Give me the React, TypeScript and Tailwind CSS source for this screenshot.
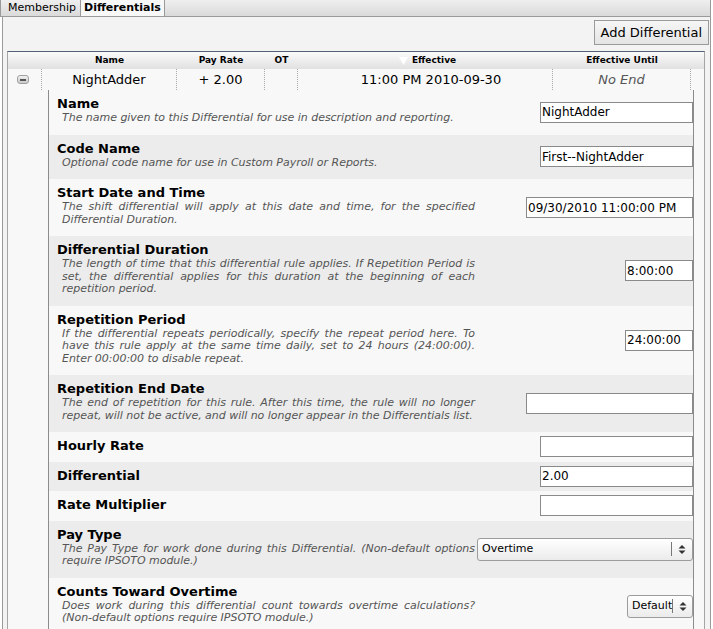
import React from 'react';

type Field = {
  label: string;
  desc?: string;
  value?: string;
  kind?: 'text' | 'select';
  width: string;
  shade: boolean;
};

const fields: Field[] = [
  { label: 'Name', desc: 'The name given to this Differential for use in description and reporting.', value: 'NightAdder', width: 'w-[153px]', shade: false },
  { label: 'Code Name', desc: 'Optional code name for use in Custom Payroll or Reports.', value: 'First--NightAdder', width: 'w-[153px]', shade: true },
  { label: 'Start Date and Time', desc: 'The shift differential will apply at this date and time, for the specified Differential Duration.', value: '09/30/2010 11:00:00 PM', width: 'w-[167px]', shade: false },
  { label: 'Differential Duration', desc: 'The length of time that this differential rule applies. If Repetition Period is set, the differential applies for this duration at the beginning of each repetition period.', value: '8:00:00', width: 'w-[68px]', shade: true },
  { label: 'Repetition Period', desc: 'If the differential repeats periodically, specify the repeat period here. To have this rule apply at the same time daily, set to 24 hours (24:00:00). Enter 00:00:00 to disable repeat.', value: '24:00:00', width: 'w-[68px]', shade: false },
  { label: 'Repetition End Date', desc: 'The end of repetition for this rule. After this time, the rule will no longer repeat, will not be active, and will no longer appear in the Differentials list.', value: '', width: 'w-[167px]', shade: true },
  { label: 'Hourly Rate', value: '', width: 'w-[153px]', shade: false },
  { label: 'Differential', value: '2.00', width: 'w-[153px]', shade: true },
  { label: 'Rate Multiplier', value: '', width: 'w-[153px]', shade: false },
  { label: 'Pay Type', desc: 'The Pay Type for work done during this Differential. (Non-default options require IPSOTO module.)', value: 'Overtime', kind: 'select', width: 'w-[216px]', shade: true },
  { label: 'Counts Toward Overtime', desc: 'Does work during this differential count towards overtime calculations? (Non-default options require IPSOTO module.)', value: 'Default', kind: 'select', width: 'w-[66px]', shade: false },
];

function Arrows() {
  return (
    <svg width="8" height="11" viewBox="0 0 8 11">
      <polygon points="0.5,4.5 4,1 7.5,4.5" fill="#333" />
      <polygon points="0.5,6.5 4,10 7.5,6.5" fill="#333" />
    </svg>
  );
}

function Select({ value, width }: { value: string; width: string }) {
  return (
    <div className={`${width} flex h-[23px] items-center rounded-[3px] border border-[#9c9c9c] bg-gradient-to-b from-white to-[#ebebeb] text-[11px] text-black`}>
      <span className="flex-1 whitespace-nowrap pl-[4px]">{value}</span>
      <span className="h-[14px] border-l border-[#777]" />
      <span className="flex w-[20px] shrink-0 justify-center">
        <Arrows />
      </span>
    </div>
  );
}

function FieldRow({ f }: { f: Field }) {
  return (
    <div className={`flex ${f.shade ? 'bg-[#ececec]' : 'bg-[#f8f8f8]'}`}>
      <div className={`w-[426px] shrink-0 pl-[8px] pt-[5px] ${f.desc ? 'pb-[10px]' : 'pb-[7.5px]'}`}>
        <div className="text-[13px] font-bold leading-[17px] text-black">{f.label}</div>
        {f.desc && (
          <div className="pl-[5px] text-justify text-[11px] italic leading-[12.5px] tracking-[-0.03px] text-[#555]">{f.desc}</div>
        )}
      </div>
      <div className="flex flex-1 items-center justify-end">
        {f.kind === 'select' ? (
          <Select value={f.value ?? ''} width={f.width} />
        ) : (
          <input
            readOnly
            value={f.value}
            className={`${f.width} h-[21px] border border-[#8a8a8a] bg-white pl-[1px] text-[12px] text-black outline-none`}
          />
        )}
      </div>
    </div>
  );
}

export default function App() {
  return (
    <div className="h-[629px] w-[713px] overflow-hidden bg-white font-['DejaVu_Sans',sans-serif] text-black">
      {/* tabs */}
      <div className="flex h-[17px] w-[711px] border-x border-b border-[#9a9a9a] bg-gradient-to-b from-[#efefef] to-[#dadada] text-[11px] leading-[16px]">
        <div className="border-r border-[#9a9a9a] pl-[7px] pr-[4px]">Membership</div>
        <div className="border-r border-[#9a9a9a] bg-[#f8f8f8] px-[3px] font-bold">Differentials</div>
      </div>

      <div className="ml-[2px] h-[620px] w-[709px] border-x border-[#9a9a9a] bg-[#f3f3f3]">
        <div className="flex justify-end pr-[1px] pt-[3px]">
          <button className="h-[25px] border border-[#9a9a9a] bg-gradient-to-b from-[#f6f6f6] to-[#e4e4e4] px-[6px] text-[13px] text-black">
            Add Differential
          </button>
        </div>

        <div className="ml-[4px] mt-[6px] w-[698px] border-x border-t border-x-[#a5a5a5] border-t-[#566075] bg-[#f8f8f8]">
          {/* header */}
          <div className="grid h-[17px] grid-cols-[34px_135px_88px_33px_255px_138px_1fr] items-center bg-gradient-to-b from-[#fafafa] to-[#e1e1e1] text-[9px] font-bold">
            <div />
            <div className="text-center">Name</div>
            <div className="text-center">Pay Rate</div>
            <div className="text-center">OT</div>
            <div className="flex items-center justify-center gap-[4px] pl-[4px]">
              <svg width="9" height="8" viewBox="0 0 9 8">
                <polygon points="0,0 9,0 4.5,8" fill="#fff" />
              </svg>
              <span>Effective</span>
            </div>
            <div className="text-center">Effective Until</div>
            <div />
          </div>

          {/* data row */}
          <div className="grid h-[21px] grid-cols-[34px_135px_88px_33px_255px_138px_1fr] items-stretch text-[13px]">
            <div className="flex items-center border-r border-dotted border-[#aaa] pl-[9px]">
              <div className="flex h-[9px] w-[12px] items-center justify-center rounded-[3px] border border-[#a0a0a0] bg-gradient-to-b from-[#f2f2f2] to-[#c9c9c9]">
                <div className="h-[2px] w-[6px] bg-[#555]" />
              </div>
            </div>
            <div className="flex items-center justify-center border-r border-dotted border-[#aaa]">NightAdder</div>
            <div className="flex items-center justify-center border-r border-dotted border-[#aaa]">+ 2.00</div>
            <div className="border-r border-dotted border-[#aaa]" />
            <div className="flex items-center justify-center border-r border-dotted border-[#aaa] pl-[12px]">11:00 PM 2010-09-30</div>
            <div className="flex items-center justify-center border-r border-dotted border-[#aaa] italic text-[#555]">No End</div>
            <div />
          </div>

          {/* details */}
          <div className="ml-[40px] mr-[10px] border-x border-[#8c8c8c]">
            {fields.map((f) => (
              <FieldRow key={f.label} f={f} />
            ))}
          </div>
        </div>
      </div>
    </div>
  );
}
